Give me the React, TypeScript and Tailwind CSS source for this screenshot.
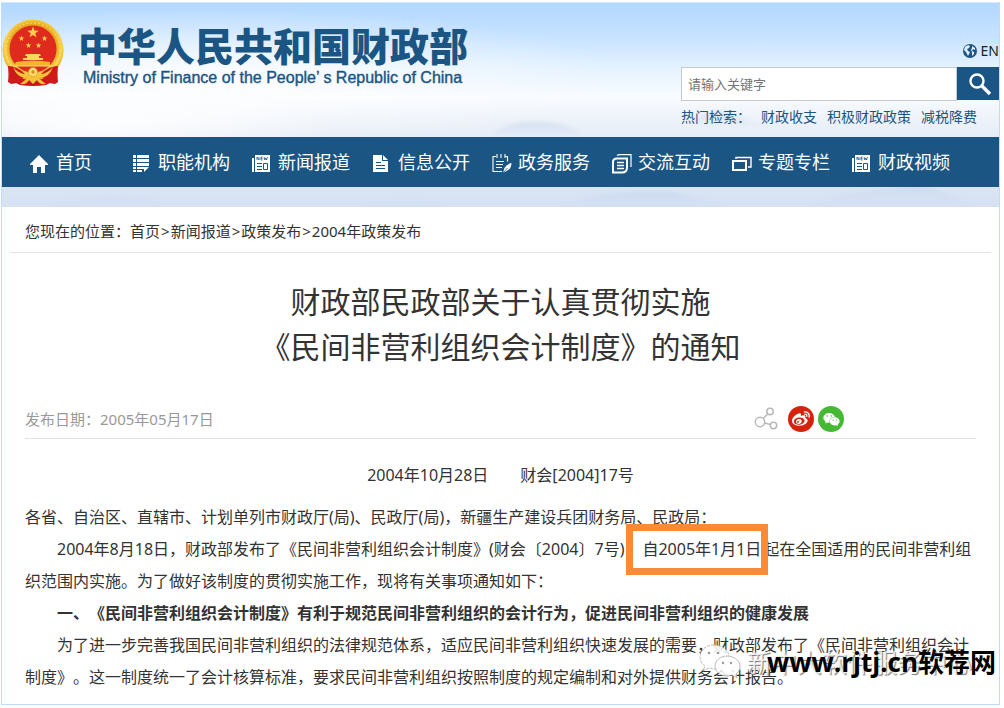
import type { ReactNode } from "react";
import { FaWeibo, FaWeixin } from "react-icons/fa";

function star(cx: number, cy: number, r: number) {
  const pts: string[] = [];
  for (let i = 0; i < 10; i++) {
    const rad = i % 2 === 0 ? r : r * 0.4;
    const a = (Math.PI / 5) * i - Math.PI / 2;
    pts.push(`${(cx + rad * Math.cos(a)).toFixed(2)},${(cy + rad * Math.sin(a)).toFixed(2)}`);
  }
  return pts.join(" ");
}

function Emblem() {
  return (
    <svg viewBox="0 0 62 68" className="h-[68px] w-[62px] shrink-0" aria-hidden="true">
      <defs>
        <radialGradient id="gold" cx="50%" cy="45%" r="55%">
          <stop offset="0.7" stopColor="#e9a81f" />
          <stop offset="0.85" stopColor="#f8d553" />
          <stop offset="1" stopColor="#e0a01c" />
        </radialGradient>
      </defs>
      <path d="M8 45 L6 63 Q10 66 14 64 L18 66 Q31 68 44 66 L48 64 Q53 66 56 63 L54 45Z" fill="#c8161a" />
      <circle cx="31" cy="31" r="30.5" fill="url(#gold)" />
      <circle cx="31" cy="31" r="27" fill="none" stroke="#fbe27a" strokeWidth="1" strokeDasharray="2 2" />
      <circle cx="31" cy="30" r="23.5" fill="#df2a1e" />
      <polygon points={star(31, 13.5, 6)} fill="#f9d24d" />
      <polygon points={star(19.5, 19.5, 3)} fill="#f9d24d" />
      <polygon points={star(42.5, 19.5, 3)} fill="#f9d24d" />
      <polygon points={star(26.5, 26.5, 3)} fill="#f9d24d" />
      <polygon points={star(36.5, 26.5, 3)} fill="#f9d24d" />
      <path d="M24 35h14l1 2h-2v2h4v2H21v-2h4v-2h-2z" fill="#fbd75a" />
      <path d="M14 43q17-3 34 0v4H12z" fill="#f3b52d" />
      <path d="M9 47h44" stroke="#fbe27a" strokeWidth="1.2" />
      <path d="M6 47q9 0 17 8l-6 10q-3-4-8 0L7 63z" fill="#cf1a1a" />
      <path d="M56 47q-9 0-17 8l6 10q3-4 8 0l2-2z" fill="#cf1a1a" />
      <path d="M11 48q8 10 20 6q12 4 20-6q-5 13-16 10l9 7q-7 1-9-4l-4 4l-4-4q-2 5-9 4l9-7Q16 61 11 48z" fill="#f5c23a" />
      <circle cx="31" cy="53" r="4.5" fill="#fbdf74" stroke="#d98f18" strokeWidth="1" strokeDasharray="1.5 1" />
      <circle cx="31" cy="53" r="1.7" fill="#d98f18" />
    </svg>
  );
}

function Icon({ children }: { children: ReactNode }) {
  return (
    <svg viewBox="0 0 20 20" className="mt-1 size-5 shrink-0" fill="none" stroke="currentColor" aria-hidden="true">
      {children}
    </svg>
  );
}

const home = (
  <Icon>
    <path d="M9 1 0 10v1h3v8h4v-6h4v6h4v-8h3v-1z" fill="currentColor" stroke="none" />
  </Icon>
);
const list = (
  <Icon>
    <path
      d="M1 1h3v3H1zM5 1h12v3H5zM1 5h3v3H1zM5 5h12v3H5zM1 9h3v3H1zM5 9h12v3H5zM1 13h3v2H1zM5 13h12l-5 5v-3H5zM1 16h3v2H1zM5 16h5v2H5z"
      fill="currentColor"
      stroke="none"
    />
  </Icon>
);
const news = (
  <Icon>
    <path d="M3 1h15v17H3zM0 4h2v14H0z" fill="currentColor" stroke="none" />
    <path d="M5 6V3l2 3V3M10.500 3H9v3h1.500M9 4.500h1.500M12 3l.8 3 .9-2 .9 2 .8-3" stroke="#1b5583" strokeWidth="0.8" />
    <path d="M5 9.500h5M5 12.500h5M5 15.500h5M11.500 9.500h4v6h-4z" stroke="#1b5583" />
  </Icon>
);
const doc = (
  <Icon>
    <path d="M1 1h9v6h6v11H1zM11 1l5 5h-5z" fill="currentColor" stroke="none" />
    <path d="M4 8.500h5M4 11.500h9M4 14.500h9" stroke="#1b5583" strokeWidth="1.2" />
  </Icon>
);
const note = (
  <Icon>
    <path d="M4 2.500H1v15h9M13 2.500h2.500v5M5 0v4M9 0v4M13 0v4M4 7.500h8M4 10.500h7M4 13.500h6" strokeWidth="1.100" />
    <path d="M19.500 9q-5 1-7 5l-1.500 5 3.500-2q5-2 5-8z" fill="currentColor" stroke="none" />
    <path d="m11 19 4.500-5" stroke="#1b5583" strokeWidth="0.8" />
  </Icon>
);
const pages = (
  <Icon>
    <path d="M5 4.500h10v9q0 5-5 5H1V8q0-3.500 4-3.500z" strokeWidth="2" />
    <path d="M5 1.500q1-.8 3-.8h11V13" strokeWidth="1.200" />
    <path d="M5 8.500h7M5 11.500h7M5 14.500h7" strokeWidth="1.500" />
  </Icon>
);
const windows = (
  <Icon>
    <path d="M1 7h13v9H1z" strokeWidth="2" />
    <path d="M4 5V3.500h15V13h-3" strokeWidth="1.400" />
  </Icon>
);

const navItems = [
  { label: "首页", icon: home },
  { label: "职能机构", icon: list },
  { label: "新闻报道", icon: news },
  { label: "信息公开", icon: doc },
  { label: "政务服务", icon: note },
  { label: "交流互动", icon: pages },
  { label: "专题专栏", icon: windows },
  { label: "财政视频", icon: news },
];

const crumbs = ["首页", "新闻报道", "政策发布", "2004年政策发布"];

function Header() {
  return (
    <header className="flex h-[135px] items-start justify-between border-t border-[#d5e9ff]">
      <a href="#" className="flex items-start pt-4 text-[#1b5583]">
        <Emblem />
        <span className="flex flex-col pl-3.5 pt-1">
          <span className="text-[39px] leading-[45px] font-black whitespace-nowrap">中华人民共和国财政部</span>
          <span className="pl-[5px] font-['Liberation_Sans',sans-serif] text-base leading-5 whitespace-nowrap [-webkit-text-stroke:0.4px_#1b5583]">
            Ministry of Finance of the People’ s Republic of China
          </span>
        </span>
      </a>
      <div className="flex w-[318px] flex-col pt-[38px]">
        <a href="#" className="flex items-center gap-1 self-end text-sm leading-5 text-[#222]">
          <svg viewBox="0 0 14 14" className="size-3.5" aria-hidden="true">
            <circle cx="7" cy="7" r="7" fill="#1b5583" />
            <path d="M2 3q3-3 5-1L6 4 4 5l1 2 2 1-1 2-1 2q-1-2-2-4L1 6zM9 2l3 2v2l-2-1-1 2 2 1v2l-2 2V8L8 6l1-2z" fill="#e4f1ff" />
          </svg>
          EN
        </a>
        <form className="mt-1.5 flex" onSubmit={(e) => e.preventDefault()}>
          <input
            type="search"
            aria-label="请输入关键字"
            placeholder="请输入关键字"
            className="h-[34px] min-w-0 grow border border-[#c6cacd] bg-white px-1.5 text-[13px] text-[#333] outline-none placeholder:text-[#757575]"
          />
          <button type="submit" aria-label="搜索" className="flex h-[33px] w-[42px] items-center justify-center bg-[#1b5583] pl-1 text-white">
            <svg viewBox="0 0 24 24" className="size-6" fill="none" stroke="currentColor" aria-hidden="true">
              <circle cx="9" cy="9" r="6.500" strokeWidth="2.400" />
              <path d="m14 14 8 8" strokeWidth="3.400" />
            </svg>
          </button>
        </form>
        <p className="mt-1.5 flex text-sm leading-5 whitespace-nowrap text-[#1b5583]">
          <span className="mr-2.5">热门检索：</span>
          <span className="flex gap-2.5">
            <a href="#">财政收支</a>
            <a href="#">积极财政政策</a>
            <a href="#">减税降费</a>
          </span>
        </p>
      </div>
    </header>
  );
}

function Clouds() {
  return (
    <svg viewBox="0 0 1000 206" preserveAspectRatio="none" className="absolute inset-x-0 top-0 -z-10 h-[206px] w-full" aria-hidden="true">
      <defs>
        <linearGradient id="sky" x1="0" y1="0" x2="0" y2="1">
          <stop offset="0" stopColor="#b2d7ff" />
          <stop offset="0.15" stopColor="#c4e1ff" />
          <stop offset="0.32" stopColor="#e4f2ff" />
          <stop offset="0.46" stopColor="#f8fbff" />
          <stop offset="0.66" stopColor="#e5ecf6" />
          <stop offset="1" stopColor="#d5e1f3" />
        </linearGradient>
        <radialGradient id="glow">
          <stop offset="0" stopColor="#fff" stopOpacity="0.85" />
          <stop offset="1" stopColor="#fff" stopOpacity="0" />
        </radialGradient>
        <linearGradient id="hill" x1="0" y1="0" x2="0" y2="1">
          <stop offset="0" stopColor="#c0d2ea" stopOpacity="0.6" />
          <stop offset="1" stopColor="#d5e1f3" stopOpacity="0.1" />
        </linearGradient>
        <filter id="soften" x="-10%" y="-30%" width="120%" height="160%">
          <feGaussianBlur stdDeviation="2" />
        </filter>
      </defs>
      <rect width="1000" height="206" fill="url(#sky)" />
      <ellipse cx="200" cy="75" rx="420" ry="70" fill="url(#glow)" />
      <ellipse cx="100" cy="120" rx="240" ry="45" fill="url(#glow)" />
      <g fill="url(#hill)" filter="url(#soften)">
        <path d="M490 136q10-17 45-16 40 0 50 16z" />
        <path d="M340 208q40-14 90-8l30 8zM540 208q60-20 130-18l80 18z" />
        <path d="M790 208q50-18 100-22l30-6 70 28zM20 208q60-18 130-12l30 12z" />
        <path d="M690 122q15-16 40-12l40 16z" />
      </g>
    </svg>
  );
}

function ShareBar() {
  return (
    <div className="mr-[132px] flex items-center gap-1">
      <button type="button" aria-label="分享" className="mr-1.5">
        <svg viewBox="0 0 24 24" className="size-6" fill="none" stroke="#b9b9b9" strokeWidth="1.500" aria-hidden="true">
          <circle cx="6" cy="15" r="4.700" />
          <circle cx="16" cy="4.500" r="3.200" />
          <circle cx="19.500" cy="18.500" r="3.200" />
          <path d="m9 11.500 5-4.500M10.500 16l6 1.500" />
        </svg>
      </button>
      <button type="button" aria-label="微博" className="flex size-[26px] items-center justify-center rounded-full bg-[#d6210d] text-white">
        <FaWeibo size={18} />
      </button>
      <button type="button" aria-label="微信" className="flex size-[26px] items-center justify-center rounded-full bg-[#45b934] text-white">
        <FaWeixin size={17} />
      </button>
    </div>
  );
}

function Watermark() {
  return (
    <div className="pointer-events-none absolute right-[3px] bottom-6 h-9 whitespace-nowrap" aria-hidden="true">
      <div className="flex items-center gap-1.5 pr-6">
        <svg viewBox="0 0 42 36" className="h-9 w-[42px]" fill="#fff" fillOpacity="0.85" stroke="#aaa" strokeWidth="0.8">
          <path d="M15 1C7 1 1 6 1 13c0 4 2 7 5 9l-2 5 6-3 6 1c8 0 14-5 14-12S23 1 15 1z" strokeDasharray="3 1" />
          <path d="M28 12c-7 0-12 5-12 10s5 10 12 10l5-1 5 3-1-4c3-2 4-5 4-8 0-5-6-10-13-10z" />
          <g fill="#888" stroke="none">
            <circle cx="10" cy="9" r="1.300" />
            <circle cx="19" cy="9" r="1.300" />
            <circle cx="24" cy="19" r="1.200" />
            <circle cx="32" cy="19" r="1.200" />
          </g>
        </svg>
        <span className="text-[25px] leading-9 text-white/80 [text-shadow:1px_1px_1px_#777]">新中大软件服务中心</span>
      </div>
      <div className="absolute right-0 bottom-0 font-['Open_Sans','Noto_Sans_CJK_SC',sans-serif] text-[26px] leading-9 font-bold text-black">
        www.rjtj.cn软荐网
      </div>
    </div>
  );
}

export default function App() {
  return (
    <div className="bg-white pt-0.5 pr-1 pb-[3px] pl-px font-['Noto_Sans','Noto_Sans_CJK_SC',sans-serif] text-[#333] [text-spacing-trim:space-all]">
      <div className="relative isolate border-x border-b border-[#bbdcff]">
        <Clouds />
        <Header />
        <nav className="bg-[#1b5583] pl-7 text-lg leading-[50px] text-white">
          <ul className="flex gap-[22px] whitespace-nowrap">
            {navItems.map((item) => (
              <li key={item.label} className="first:mr-[18px]">
                <a href="#" className="flex items-center gap-1.5">
                  {item.icon}
                  {item.label}
                </a>
              </li>
            ))}
          </ul>
        </nav>
        <main className="mt-5 bg-white">
          <div className="mx-2 border-b border-[#e2e2e2] px-[15px] pt-1 text-[15px] leading-[41px]">
            您现在的位置：
            {crumbs.map((crumb, i) => (
              <span key={crumb}>
                {i > 0 && <span className="mx-px">&gt;</span>}
                <a href="#">{crumb}</a>
              </span>
            ))}
          </div>
          <article className="pt-[26px] pr-[23px] pb-[11px] pl-[23px]">
            <h1 className="text-center text-[30px] leading-[45px]">
              财政部民政部关于认真贯彻实施
              <br />
              《民间非营利组织会计制度》的通知
            </h1>
            <div className="mt-[31px] flex h-[39px] items-center justify-between border-b border-[#e2e2e2] text-[15px] text-[#999]">
              <span>发布日期：2005年05月17日</span>
              <ShareBar />
            </div>
            <div className="mt-5 text-base leading-8">
              <p className="mb-2.5 text-center">2004年10月28日　　财会[2004]17号</p>
              <p>各省、自治区、直辖市、计划单列市财政厅(局)、民政厅(局)，新疆生产建设兵团财务局、民政局：</p>
              <p className="indent-8">
                2004年8月18日，财政部发布了《民间非营利组织会计制度》(财会〔2004〕7号)，
                <mark className="relative isolate mx-0.5 inline-block bg-transparent indent-0 text-inherit">
                  <span className="absolute -top-[9px] -right-[7px] -bottom-[10px] -left-4 -z-10 border-7 border-[#f98a38] bg-white" />
                  自2005年1月1日
                </mark>
                起在全国适用的民间非营利组织范围内实施。为了做好该制度的贯彻实施工作，现将有关事项通知如下：
              </p>
              <p className="indent-8 font-bold">一、《民间非营利组织会计制度》有利于规范民间非营利组织的会计行为，促进民间非营利组织的健康发展</p>
              <p className="indent-8">
                为了进一步完善我国民间非营利组织的法律规范体系，适应民间非营利组织快速发展的需要，财政部发布了《民间非营利组织会计制度》。这一制度统一了会计核算标准，要求民间非营利组织按照制度的规定编制和对外提供财务会计报告。
              </p>
            </div>
          </article>
        </main>
        <Watermark />
      </div>
    </div>
  );
}
